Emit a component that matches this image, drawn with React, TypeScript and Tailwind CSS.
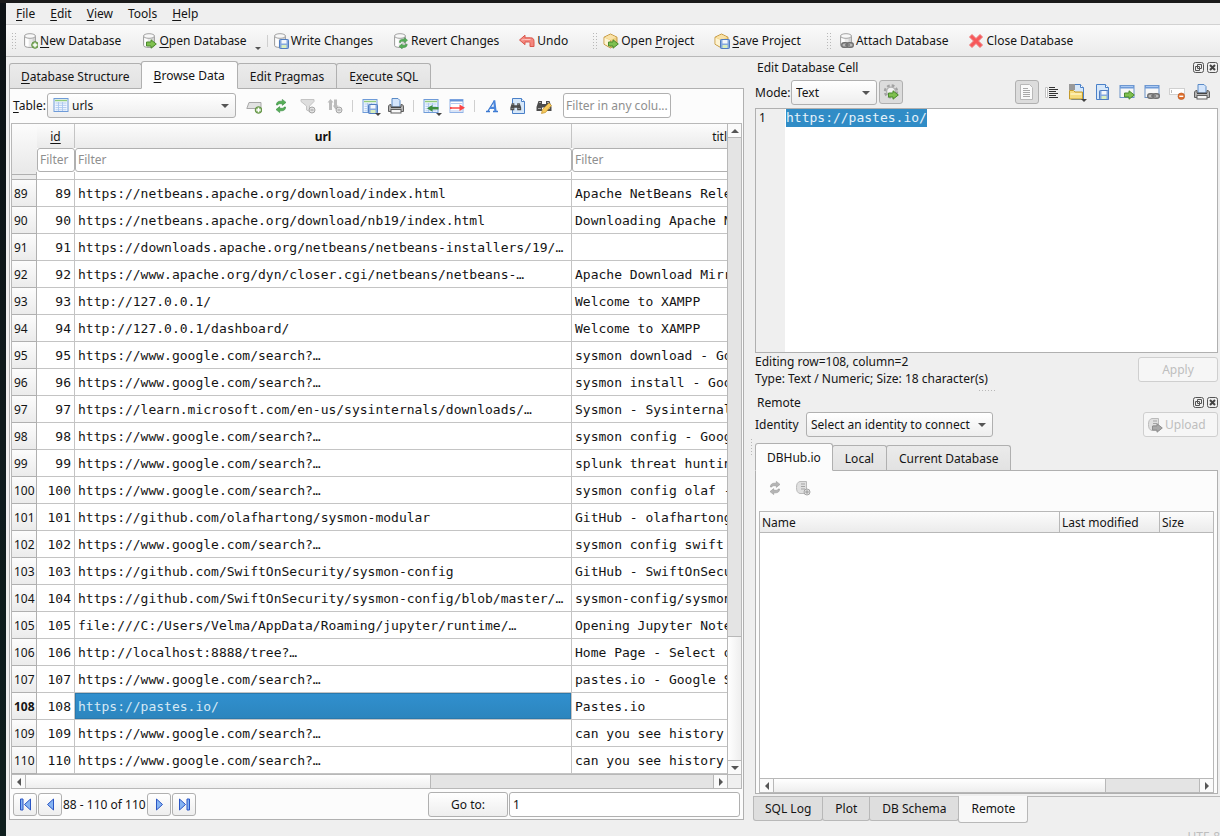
import { useEffect, useRef, useState } from 'react';
import type { ReactNode } from 'react';
import clsx from 'clsx';

interface UrlRow {
  id: number;
  url: string;
  title: string;
}

const rows: UrlRow[] = [
  { id: 89, url: 'https://netbeans.apache.org/download/index.html', title: 'Apache NetBeans Releases' },
  { id: 90, url: 'https://netbeans.apache.org/download/nb19/index.html', title: 'Downloading Apache NetBeans 19' },
  { id: 91, url: 'https://downloads.apache.org/netbeans/netbeans-installers/19/…', title: '' },
  { id: 92, url: 'https://www.apache.org/dyn/closer.cgi/netbeans/netbeans-…', title: 'Apache Download Mirrors' },
  { id: 93, url: 'http://127.0.0.1/', title: 'Welcome to XAMPP' },
  { id: 94, url: 'http://127.0.0.1/dashboard/', title: 'Welcome to XAMPP' },
  { id: 95, url: 'https://www.google.com/search?…', title: 'sysmon download - Google Search' },
  { id: 96, url: 'https://www.google.com/search?…', title: 'sysmon install - Google Search' },
  { id: 97, url: 'https://learn.microsoft.com/en-us/sysinternals/downloads/…', title: 'Sysmon - Sysinternals' },
  { id: 98, url: 'https://www.google.com/search?…', title: 'sysmon config - Google Search' },
  { id: 99, url: 'https://www.google.com/search?…', title: 'splunk threat hunting' },
  { id: 100, url: 'https://www.google.com/search?…', title: 'sysmon config olaf - Google Search' },
  { id: 101, url: 'https://github.com/olafhartong/sysmon-modular', title: 'GitHub - olafhartong/sysmon-modular' },
  { id: 102, url: 'https://www.google.com/search?…', title: 'sysmon config swift' },
  { id: 103, url: 'https://github.com/SwiftOnSecurity/sysmon-config', title: 'GitHub - SwiftOnSecurity' },
  { id: 104, url: 'https://github.com/SwiftOnSecurity/sysmon-config/blob/master/…', title: 'sysmon-config/sysmonconfig' },
  { id: 105, url: 'file:///C:/Users/Velma/AppData/Roaming/jupyter/runtime/…', title: 'Opening Jupyter Notebook' },
  { id: 106, url: 'http://localhost:8888/tree?…', title: 'Home Page - Select or create' },
  { id: 107, url: 'https://www.google.com/search?…', title: 'pastes.io - Google Search' },
  { id: 108, url: 'https://pastes.io/', title: 'Pastes.io' },
  { id: 109, url: 'https://www.google.com/search?…', title: 'can you see history' },
  { id: 110, url: 'https://www.google.com/search?…', title: 'can you see history' },
];

/* "&" marks the shortcut letter */
function Mnemonic({ text }: { text: string }) {
  const at = text.indexOf('&');
  if (at < 0) return <span>{text}</span>;
  return (
    <span>
      {text.slice(0, at)}
      <u className="underline-offset-2">{text[at + 1]}</u>
      {text.slice(at + 2)}
    </span>
  );
}

/* Icons */
function Svg({ children }: { children: ReactNode }) {
  return (
    <svg width="16" height="16" viewBox="0 0 16 16" className="shrink-0" aria-hidden="true">
      {children}
    </svg>
  );
}

const Cylinder = () => (
  <>
    <path d="M1.500 3.200v9.300c0 1.200 2.300 2 5.500 2s5.500-.8 5.500-2V3.200z" fill="#e9e9e9" stroke="#a3a3a3" />
    <path d="M2.500 5v7.600c.8.6 2 .9 3.200 1V5.600z" fill="#fff" />
    <path d="M9.500 5.400v8.200l2.500-.8V4.600z" fill="#d2d2d2" />
    <ellipse cx="7" cy="3" rx="5.500" ry="2.300" fill="#f8f8f8" stroke="#a3a3a3" />
  </>
);

const Plus = () => (
  <>
    <circle cx="12" cy="12" r="3.300" fill="#8db871" stroke="#5f8f42" />
    <path d="M12 9.800v4.400M9.800 12h4.400" stroke="#fff" strokeWidth="1.400" />
  </>
);

const GoArrow = ({ grey }: { grey?: boolean }) => (
  <path
    d="M5.500 9h4.500V6.800l5.300 4.200-5.300 4.200V13H5.500z"
    fill={grey ? '#a9a9a9' : '#7fc04f'}
    stroke={grey ? '#8d8d8d' : '#4b8a2c'}
    strokeLinejoin="round"
  />
);

const Floppy = () => (
  <>
    <rect x="6.500" y="6.500" width="9" height="9" rx=".8" fill="#86a9df" stroke="#4f7cc0" />
    <rect x="8.500" y="7" width="5" height="3.500" fill="#f4f7fc" />
    <rect x="8.500" y="12" width="5" height="3" fill="#d9eebd" />
  </>
);

const Chain = () => (
  <g fill="none" stroke="#707070" strokeWidth="1.400">
    <rect x="3.700" y="9.700" width="6.500" height="4.600" rx="2.300" fill="#b9b9b9" />
    <rect x="8.800" y="9.700" width="6.500" height="4.600" rx="2.300" fill="#b9b9b9" />
    <path d="M7 12h5" />
  </g>
);

const Arrows = ({ grey }: { grey?: boolean }) => (
  <g fill={grey ? '#b5b5b5' : '#55b055'} stroke={grey ? '#9a9a9a' : '#3b8a44'} strokeWidth=".6">
    <path d="M3.400 7C3.400 4.400 5 3.200 7 3.200h2.300V1.400L13 4.400 9.300 7.400V5.700H7C5.700 5.700 5 6.200 4.900 7z" />
    <path d="M12.600 9C12.600 11.600 11 12.800 9 12.800H6.700v1.800L3 11.600l3.700-3v1.700H9c1.300 0 2-.5 2.100-1.300z" />
  </g>
);

const Sheet = () => (
  <>
    <rect x="1" y="1.500" width="14" height="13" fill="#f3f8ff" stroke="#6f9bd8" />
    <path d="M2 3.500h12" stroke="#92cc7c" strokeWidth="1.500" />
    <path d="M2.500 6h11M2.500 8.300h11M2.500 10.600h11M2.500 12.800h11M5.500 5v9M9.500 5v9" stroke="#a9c6ee" strokeWidth=".9" />
  </>
);

const Box = () => (
  <>
    <path d="M1 4.200 7.500 1 14 4.200v7L7.500 15 1 11.200z" fill="#f0d080" stroke="#c59a44" strokeLinejoin="round" />
    <path d="M1.500 4.800 7.500 7.500v6.800l-6-3.400z" fill="#fdf3d3" />
    <path d="M2 4.200 7.500 1.600 13 4.200 7.500 7z" fill="#f9e2a8" />
    <path d="M7.500 7.200V14.500" stroke="#d8ae54" />
  </>
);

const Funnel = () => <path d="M1 1.500h13v2L9.500 8v5.500l-3-1.500V8L1 3.500z" fill="#dedede" stroke="#c4c4c4" />;

const Page = () => (
  <>
    <path d="M2.500.5h9l3 3v12h-12z" fill="#d7e8fa" stroke="#4a80c8" />
    <path d="M11.500.5v3h3" fill="#fff" stroke="#4a80c8" />
  </>
);

const Printer = () => (
  <>
    <path d="M4 .500h6l2 2V9H4z" fill="#d4e5fb" stroke="#5a8ac6" />
    <path d="M.5 9C.5 7 1.500 6.500 3 6.500V9h10V6.500c1.500 0 2.500.5 2.500 2.500v4.500H.5z" fill="#b5b5b5" stroke="#5f5f5f" />
    <rect x="3" y="11.500" width="10" height="3.500" fill="#f8f8f8" stroke="#5f5f5f" />
    <path d="M3 9.500h10" stroke="#444" />
  </>
);

const Binoculars = () => (
  <>
    <path d="M2.500 3h3.500v3h4V3h3.500l2 6v4H10V9.500H6V13H.5V9z" fill="#4c4c4c" />
    <path d="M2 10.500h3M11 10.500h3M3 4.500h2M11 4.500h2" stroke="#aaa" />
  </>
);

const Window = () => (
  <>
    <rect x="1" y="1.500" width="14" height="12" fill="#f7f7f7" stroke="#6d93c8" />
    <path d="M1 3h14" stroke="#6f9bd8" strokeWidth="3" />
    <path d="M2 2.500h12" stroke="#a9c8f2" />
  </>
);

const Server = () => (
  <>
    <path d="M5 1.500h6.500v12H5C2.500 13 1.500 11 1.500 7.500S2.500 2 5 1.500z" fill="#e0e0e0" stroke="#bababa" />
    <path d="M6 4h4M6 6.500h4M6 9h4" stroke="#a5a5a5" />
  </>
);

const icons = {
  newDb: <Svg><g transform="translate(1 0)"><Cylinder /></g><g transform="translate(1 0)"><Plus /></g></Svg>,
  openDb: <Svg><g transform="translate(1 0)"><Cylinder /></g><GoArrow /></Svg>,
  writeDb: <Svg><Cylinder /><Floppy /></Svg>,
  revertDb: <Svg><Cylinder /><g transform="translate(3.500 3.500) scale(.85)"><Arrows /></g></Svg>,
  undo: (
    <Svg>
      <path d="M.5 7 6 2.200v2.600h5.500c2.500 0 3.500 1.200 3.500 3.700v5h-4V10.500c0-1-.3-1.500-1.200-1.500H6v2.700z" fill="#f4867d" stroke="#d9574c" strokeLinejoin="round" />
      <path d="M2.500 7 5.500 6.500h6" fill="none" stroke="#fbc4be" />
    </Svg>
  ),
  openProject: <Svg><Box /><GoArrow /></Svg>,
  saveProject: <Svg><Box /><Floppy /></Svg>,
  attach: <Svg><g transform="translate(1 0)"><Cylinder /></g><Chain /></Svg>,
  close: (
    <Svg>
      <path d="M1.500 4 4 1.500l4 4 4-4L14.500 4l-4 4 4 4-2.500 2.500-4-4-4 4L1.500 12l4-4z" fill="#f7585a" stroke="#ee7a7a" strokeLinejoin="round" />
    </Svg>
  ),
  table: <Svg><Sheet /></Svg>,
  insertRow: (
    <Svg>
      <path d="M3 4.500h12v6H.8z" fill="#e2e2e2" stroke="#a8a8a8" />
      <g transform="translate(.5 0)"><Plus /></g>
    </Svg>
  ),
  refresh: <Svg><Arrows /></Svg>,
  refreshGrey: <Svg><Arrows grey /></Svg>,
  clearFilter: (
    <Svg>
      <Funnel />
      <circle cx="12" cy="12" r="3" fill="#e2e2e2" stroke="#a5a5a5" />
      <path d="M10.500 12h3" stroke="#999" />
    </Svg>
  ),
  clearSort: (
    <Svg>
      <path d="M3.500 1 6.500 4.500H5V12H2V4.500H.5zM7 1.500h3v6h1.500L8.500 11.500 5.800 7.500H7z" fill="#bcbcbc" />
      <circle cx="12" cy="12" r="3" fill="#e2e2e2" stroke="#a5a5a5" />
      <path d="M10.500 12h3" stroke="#999" />
    </Svg>
  ),
  saveTable: <Svg><Sheet /><Floppy /></Svg>,
  print: <Svg><Printer /></Svg>,
  insertValues: (
    <Svg>
      <Sheet />
      <path d="M15.500 9v2.500h-6v2.200L4 10.300 9.500 7v2z" fill="#3d8f3d" />
    </Svg>
  ),
  deleteRow: (
    <Svg>
      <rect x="1" y="1.500" width="13" height="13" fill="#fff" stroke="#8fb1e6" />
      <path d="M1 2.500h13" stroke="#6493d8" strokeWidth="2" />
      <path d="M2 5.500h11M2 13h11" stroke="#b4caee" />
      <path d="M1 9h9.500V6.500L16 9.800l-5.500 3.300V11H1z" fill="#fb4444" />
      <path d="M2.500 10h8" stroke="#ffc9c9" strokeWidth=".8" />
    </Svg>
  ),
  font: (
    <Svg>
      <path d="M2 13.500h4M9 13.500h5M4 13 10.500 2.500" fill="none" stroke="#3b78d0" strokeWidth="1.300" />
      <path d="M10.200 2.500l1.300 11M6 9.800h5" fill="none" stroke="#4a86dc" strokeWidth="2.200" />
    </Svg>
  ),
  find: <Svg><Page /><g transform="translate(0 3) scale(.72)"><Binoculars /></g></Svg>,
  replace: (
    <Svg>
      <Binoculars />
      <path d="M5.500 15.500l1-4 6.500-6.500L15.500 7.500l-6 7z" fill="#f5c95c" stroke="#c08f2c" strokeWidth=".7" />
    </Svg>
  ),
  gear: (
    <Svg>
      <circle cx="8" cy="7.500" r="6" fill="none" stroke="#a2a2a2" strokeWidth="2.400" strokeDasharray="2.700 2.010" />
      <circle cx="8" cy="7.500" r="4.400" fill="#f3f3f3" stroke="#b0b0b0" strokeWidth="1.400" />
      <GoArrow />
    </Svg>
  ),
  plainPage: (
    <Svg>
      <path d="M1.500.5h9l3 3v12h-12z" fill="#fafafa" stroke="#b8b8b8" />
      <path d="M4 4.500h5M4 6.500h7M4 8.500h7M4 10.500h7M4 12.500h7" stroke="#a8a8a8" />
    </Svg>
  ),
  wrap: (
    <Svg>
      <path d="M1.500 3.500h2v10h-2z" fill="#fff" stroke="#c4c4c4" />
      <path d="M5 3.500h6M5 5.500h9M5 7.500h7M5 9.500h9M5 11.500h7M5 13.500h9" stroke="#333" />
    </Svg>
  ),
  importFile: (
    <Svg>
      <Page />
      <path d="M0 0h6v6H0z" fill="#999" />
      <path d="M.5 6.500h4L6 8h7.500v7H.5z" fill="#f6dc7e" stroke="#c49a2c" />
      <path d="M1.500 10h11" stroke="#fff3c0" strokeWidth="1.500" />
    </Svg>
  ),
  exportFile: <Svg><Page /><g transform="translate(-1 0)"><Floppy /></g></Svg>,
  openApp: <Svg><Window /><GoArrow /></Svg>,
  copyLink: <Svg><Window /><Chain /></Svg>,
  setNull: (
    <Svg>
      <rect x=".5" y="4.500" width="15" height="6" fill="#fff" stroke="#d0d0d0" />
      <path d="M2.500 6v3" stroke="#bbb" />
      <circle cx="12.300" cy="12.300" r="3.300" fill="#e0702e" stroke="#b3501a" strokeWidth=".6" />
      <path d="M10.300 12.300h4" stroke="#fff" strokeWidth="1.400" />
    </Svg>
  ),
  upload: <Svg><Server /><GoArrow grey /></Svg>,
  clone: (
    <Svg>
      <Server />
      <circle cx="12" cy="12" r="3" fill="#e0e0e0" stroke="#a5a5a5" />
      <path d="M12 10.200v3.600M10.200 12h3.600" stroke="#999" />
    </Svg>
  ),
};

type IconName = keyof typeof icons;

const triangles = {
  up: 'M0 6 4 2l4 4z',
  down: 'M0 2h8L4 6z',
  left: 'M6 0v8L2 4z',
  right: 'M2 0v8l4-4z',
};

function Triangle({ dir }: { dir: keyof typeof triangles }) {
  return (
    <svg width="8" height="8" viewBox="0 0 8 8" className="shrink-0" aria-hidden="true">
      <path d={triangles[dir]} fill="#555" />
    </svg>
  );
}

const navShapes = {
  first: 'M2.500 2h2.500v11H2.500zM12.500 2v11L6.500 7.500z',
  prev: 'M10.500 2v11L4.500 7.500z',
  next: 'M4.500 2v11l6-5.500z',
  last: 'M10 2h2.500v11H10zM2.500 2v11l6-5.500z',
};

function NavButton({ kind, label }: { kind: keyof typeof navShapes; label: string }) {
  return (
    <button aria-label={label} className="flex h-[23px] w-6 items-center justify-center rounded-[3px] border border-[#b0b0b0] bg-gradient-to-b from-white to-[#eeeeee]">
      <svg width="15" height="15" viewBox="0 0 15 15" aria-hidden="true">
        <path d={navShapes[kind]} fill="#86b4f2" stroke="#2a55c4" strokeLinejoin="round" />
      </svg>
    </button>
  );
}

/* Toolbar pieces */
function Handle() {
  return <div className="h-[17px] w-[5px] shrink-0 bg-[radial-gradient(circle,#b8b8b8_0.8px,transparent_1px)] bg-[size:3px_3px]" />;
}

function ToolButton({ icon, text }: { icon: IconName; text: string }) {
  return (
    <button className="flex shrink-0 items-center gap-0.5 pt-px whitespace-nowrap">
      {icons[icon]}
      <Mnemonic text={text} />
    </button>
  );
}

function IconButton({ icon, label, wide, menu }: { icon: IconName; label: string; wide?: boolean; menu?: boolean }) {
  return (
    <button aria-label={label} className={clsx('relative flex h-6 shrink-0 items-center justify-center', wide ? 'w-[27px]' : 'w-[26px]')}>
      {icons[icon]}
      {menu && (
        <svg width="6" height="3" viewBox="0 0 6 3" className="absolute right-0.5 bottom-0.5" aria-hidden="true">
          <path d="M0 0h6L3 3z" fill="#444" />
        </svg>
      )}
    </button>
  );
}

function Separator() {
  return <div className="mx-1 h-3 w-px shrink-0 bg-[#cfcfcf]" />;
}

function Combo({ id, value, className, icon }: { id: string; value: string; className: string; icon?: IconName }) {
  return (
    <div className={clsx('relative h-[25px] shrink-0', className)}>
      <select
        id={id}
        className={clsx(
          'h-full w-full appearance-none rounded-[3px] border border-[#b0b0b0] bg-gradient-to-b from-white to-[#eeeeee]',
          icon ? 'pl-6' : 'pl-1',
        )}
      >
        <option>{value}</option>
      </select>
      {icon && <span className="pointer-events-none absolute top-1 left-1.5">{icons[icon]}</span>}
      <span className="pointer-events-none absolute inset-y-0 right-[7px] flex items-center">
        <Triangle dir="down" />
      </span>
    </div>
  );
}

function HScroll({ thumb }: { thumb: number }) {
  return (
    <div className="flex h-[14px] min-w-0 flex-1 border-t border-[#b8b8b8] bg-[#e4e4e4]">
      <button aria-label="Scroll left" className="flex w-[14px] shrink-0 items-center justify-center border-r border-[#b8b8b8] bg-[#fafafa]">
        <Triangle dir="left" />
      </button>
      <div className="flex-1">
        <div className="h-full border-r border-[#b8b8b8] bg-gradient-to-b from-white to-[#eeeeee]" style={{ width: `${thumb}%` }} />
      </div>
      <button aria-label="Scroll right" className="flex w-[14px] shrink-0 items-center justify-center border-l border-[#b8b8b8] bg-[#fafafa]">
        <Triangle dir="right" />
      </button>
    </div>
  );
}

function Tabs({ tabs, active, onSelect }: { tabs: string[]; active: string; onSelect: (tab: string) => void }) {
  return (
    <div className="relative flex shrink-0 items-end">
      {tabs.map((tab, index) => (
        <button
          key={tab}
          onClick={() => onSelect(tab)}
          className={clsx(
            'rounded-t-[3px] border border-[#b0b0b0] pt-px whitespace-nowrap',
            index > 0 ? '-ml-px px-3' : 'px-[11px]',
            tab === active ? 'z-10 -mb-px h-7 border-b-[#fcfcfc] bg-[#fcfcfc]' : 'h-[25px] border-b-0 bg-gradient-to-b from-[#ebebeb] to-[#e2e2e2]',
          )}
        >
          <Mnemonic text={tab} />
        </button>
      ))}
    </div>
  );
}

function DockTitle({ title }: { title: string }) {
  return (
    <div className="flex h-5 shrink-0 items-center pl-0.5">
      <h2 className="flex-1 pt-0.5">{title}</h2>
      <button aria-label={`Float ${title}`}>
        <svg width="11" height="11" viewBox="0 0 11 11">
          <rect x=".5" y=".5" width="10" height="10" rx="2" fill="none" stroke="#555" />
          <path d="M4.500 2.500h4v4h-4zM2.500 4.500h4v4h-4z" fill="none" stroke="#555" />
        </svg>
      </button>
      <button aria-label={`Close ${title}`} className="ml-[3px]">
        <svg width="11" height="11" viewBox="0 0 11 11">
          <rect x=".5" y=".5" width="10" height="10" rx="2" fill="none" stroke="#555" />
          <path d="M3 3l5 5M8 3 3 8" stroke="#444" strokeWidth="2" />
        </svg>
      </button>
    </div>
  );
}

function DataGrid() {
  const selected = 108;
  const filter = 'block h-6 w-full rounded-[3px] border border-[#b0b0b0] bg-white px-0.5 pb-px font-normal placeholder:text-[#8f8f8f]';
  const head = 'bg-gradient-to-b from-[#fcfcfc] to-[#ebebeb] p-0 pt-0.5';
  const cell = "border-b border-[#c4c4c4] p-0 pt-px align-middle font-['DejaVu_Sans_Mono',monospace] text-[13px]";

  return (
    <div className="mx-px flex min-h-0 flex-1 flex-col border border-[#b8b8b8] bg-white">
      <div className="flex min-h-0 flex-1">
        <div className="min-w-0 flex-1 overflow-hidden">
          <table className="w-[862px] table-fixed border-separate border-spacing-0">
            <colgroup>
              <col className="w-[25px]" />
              <col className="w-[38px]" />
              <col className="w-[497px]" />
              <col />
            </colgroup>
            <thead>
              <tr className="h-6">
                <th rowSpan={2} className="bg-gradient-to-b from-[#fcfcfc] to-[#e9e9e9] p-0" />
                <th className={clsx(head, 'border-r border-[#c4c4c4] font-normal')}>
                  <span className="underline underline-offset-2">id</span>
                </th>
                <th className={clsx(head, 'border-r border-[#c4c4c4] font-bold')}>url</th>
                <th className={clsx(head, 'font-normal')}>title</th>
              </tr>
              <tr className="h-6">
                <td className="p-0"><input aria-label="Filter id" placeholder="Filter" className={filter} /></td>
                <td className="p-0"><input aria-label="Filter url" placeholder="Filter" className={filter} /></td>
                <td className="p-0"><input aria-label="Filter title" placeholder="Filter" className={filter} /></td>
              </tr>
              <tr className="h-2">
                <td className="border-r border-b border-[#b0b0b0] bg-[#ebebeb] p-0">
                  <div className="mb-[3px] h-px bg-[#b0b0b0]" />
                </td>
                <td className="border-r border-b border-[#c4c4c4] p-0" />
                <td className="border-r border-b border-[#c4c4c4] p-0" />
                <td className="border-b border-[#c4c4c4] p-0" />
              </tr>
            </thead>
            <tbody>
              {rows.map((row) => (
                <tr key={row.id} className="h-[27px] whitespace-nowrap">
                  <th
                    className={clsx(
                      'border-r border-b border-[#b0b0b0] bg-gradient-to-b from-[#fcfcfc] to-[#ebebeb] p-0 pt-0.5 pl-0.5 text-left',
                      row.id === selected ? 'font-bold' : 'font-normal',
                    )}
                  >
                    {row.id}
                  </th>
                  <td className={clsx(cell, 'border-r pr-[3px] text-right')}>{row.id}</td>
                  <td
                    className={clsx(
                      cell,
                      'border-r pl-[3px]',
                      row.id === selected && 'bg-gradient-to-b from-[#3190cf] to-[#2c85bd] text-[#d6e9f5] shadow-[inset_0_0_0_1px_#2a79ad]',
                    )}
                  >
                    {row.url}
                  </td>
                  <td className={clsx(cell, 'pl-[3px]')}>{row.title}</td>
                </tr>
              ))}
            </tbody>
          </table>
        </div>
        <div className="flex w-[14px] shrink-0 flex-col border-l border-[#b8b8b8] bg-[#e4e4e4]">
          <button aria-label="Scroll up" className="flex h-[14px] shrink-0 items-center justify-center border-b border-[#b8b8b8] bg-[#fafafa]">
            <Triangle dir="up" />
          </button>
          <div className="flex flex-1 flex-col justify-end">
            <div className="h-1/5 border-t border-[#b8b8b8] bg-gradient-to-r from-white to-[#eeeeee]" />
          </div>
          <button aria-label="Scroll down" className="flex h-[14px] shrink-0 items-center justify-center border-t border-[#b8b8b8] bg-[#fafafa]">
            <Triangle dir="down" />
          </button>
        </div>
      </div>
      <div className="flex shrink-0">
        <HScroll thumb={59} />
        <div className="w-[14px] border-t border-l border-[#b8b8b8] bg-[#efefef]" />
      </div>
    </div>
  );
}

function BrowsePanel() {
  return (
    <div className="flex min-h-0 flex-1 flex-col border border-[#b0b0b0] bg-[#fcfcfc]">
      <div className="flex shrink-0 items-center pt-1 pb-[5px] pl-[3px]">
        <label htmlFor="table" className="w-[34px]"><Mnemonic text="&Table:" /></label>
        <Combo id="table" value="urls" icon="table" className="mr-1 w-[189px]" />
        <IconButton icon="insertRow" label="Insert row" wide />
        <IconButton icon="refresh" label="Refresh" wide />
        <IconButton icon="clearFilter" label="Clear filters" wide />
        <IconButton icon="clearSort" label="Clear sorting" wide />
        <Separator />
        <IconButton icon="saveTable" label="Save table" menu />
        <IconButton icon="print" label="Print" />
        <Separator />
        <IconButton icon="insertValues" label="Insert values" menu />
        <IconButton icon="deleteRow" label="Delete row" />
        <Separator />
        <IconButton icon="font" label="Format" />
        <IconButton icon="find" label="Find" />
        <IconButton icon="replace" label="Replace" />
        <input
          aria-label="Filter in any column"
          placeholder="Filter in any colu..."
          className="ml-1.5 h-[25px] w-[108px] rounded-[3px] border border-[#b0b0b0] bg-white px-0.5 placeholder:text-[#8f8f8f]"
        />
      </div>

      <DataGrid />

      <div className="flex shrink-0 items-center gap-px px-[3px] pt-[3px] pb-0.5">
        <NavButton kind="first" label="First page" />
        <NavButton kind="prev" label="Previous page" />
        <span className="w-[83px] whitespace-nowrap">88 - 110 of 110</span>
        <NavButton kind="next" label="Next page" />
        <NavButton kind="last" label="Last page" />
        <button className="ml-auto h-[25px] w-20 rounded-[3px] border border-[#b0b0b0] bg-gradient-to-b from-white to-[#eeeeee]">Go to:</button>
        <input aria-label="Go to row" defaultValue="1" className="h-[25px] w-[231px] rounded-[3px] border border-[#b0b0b0] bg-white px-[3px]" />
      </div>
    </div>
  );
}

function EditCellDock() {
  const editor = useRef<HTMLTextAreaElement>(null);

  useEffect(() => {
    editor.current?.focus();
    editor.current?.select();
  }, []);

  const small = 'relative flex h-6 w-[25px] items-center justify-center';
  const pressed = 'flex h-6 w-6 items-center justify-center rounded-[3px] border border-[#b0b0b0] bg-[#dcdcdc]';

  return (
    <section className="flex min-h-0 flex-[335] flex-col pr-0.5 pl-0.5">
      <DockTitle title="Edit Database Cell" />
      <div className="mt-[3px] flex shrink-0 items-start pr-1">
        <label htmlFor="mode" className="w-9 self-center">Mode:</label>
        <Combo id="mode" value="Text" className="w-[86px]" />
        <button aria-label="Automatic mode" className={clsx(pressed, 'ml-0.5')}>{icons.gear}</button>
        <div className="ml-auto flex items-center">
          <button aria-label="Text view" className={pressed}>{icons.plainPage}</button>
          <button aria-label="Word wrap" className={small}>{icons.wrap}</button>
          <button aria-label="Import" className={small}>
            {icons.importFile}
            <svg width="6" height="3" viewBox="0 0 6 3" className="absolute right-0.5 bottom-0.5" aria-hidden="true">
              <path d="M0 0h6L3 3z" fill="#444" />
            </svg>
          </button>
          <button aria-label="Export" className={small}>{icons.exportFile}</button>
          <button aria-label="Open in application" className={small}>{icons.openApp}</button>
          <button aria-label="Copy" className={small}>{icons.copyLink}</button>
          <button aria-label="Set as NULL" className={small}>{icons.setNull}</button>
          <button aria-label="Print cell" className={small}>{icons.print}</button>
        </div>
      </div>
      <div className="mt-[3px] flex min-h-0 flex-1 border border-[#b0b0b0] bg-white">
        <div className="w-[29px] bg-[#efefef] pl-[3px] leading-[18px]">1</div>
        <textarea
          ref={editor}
          aria-label="Cell value"
          spellCheck={false}
          defaultValue="https://pastes.io/"
          className="flex-1 resize-none pl-px font-['DejaVu_Sans_Mono',monospace] text-[13px] leading-[18px] outline-none selection:bg-[#308cc6] selection:text-[#e6f2fa]"
        />
      </div>
      <div className="flex shrink-0 items-start justify-between pb-0.5">
        <p className="leading-[17px]">
          Editing row=108, column=2
          <br />
          Type: Text / Numeric; Size: 18 character(s)
        </p>
        <button disabled className="mt-1 h-[25px] w-20 rounded-[3px] border border-[#cfcfcf] bg-[#f6f6f6] text-[#bebebe]">Apply</button>
      </div>
      <div className="mx-auto h-[3px] w-[17px] shrink-0 bg-[radial-gradient(circle,#b8b8b8_0.8px,transparent_1px)] bg-[size:3px_3px]" />
    </section>
  );
}

function RemoteDock() {
  const [tab, setTab] = useState('DBHub.io');
  const [dock, setDock] = useState('Remote');
  const head = 'h-[21px] border-b border-[#b8b8b8] bg-gradient-to-b from-[#fcfcfc] to-[#ebebeb] p-0 pt-px pl-0.5 text-left font-normal';

  return (
    <section className="flex min-h-0 flex-[444] flex-col">
      <div className="flex min-h-0 flex-1 flex-col pr-0.5 pl-0.5">
        <DockTitle title="Remote" />
        <div className="flex shrink-0 items-center">
          <label htmlFor="identity" className="w-[51px]">Identity</label>
          <Combo id="identity" value="Select an identity to connect" className="w-[187px]" />
          <button disabled className="ml-auto flex h-[25px] w-[75px] items-center gap-0.5 rounded-[3px] border border-[#cfcfcf] bg-[#f6f6f6] pl-[3px] text-[#bebebe]">
            {icons.upload}
            Upload
          </button>
        </div>
        <div className="mt-1.5 flex min-h-0 flex-1 flex-col">
          <Tabs tabs={['DBHub.io', 'Local', 'Current Database']} active={tab} onSelect={setTab} />
          <div className="flex min-h-0 flex-1 flex-col border border-[#b0b0b0] bg-[#fcfcfc] px-[3px]">
            <div className="mb-1.5 flex h-[34px] shrink-0 items-center gap-3 pl-2">
              <button aria-label="Refresh remote">{icons.refreshGrey}</button>
              <button aria-label="Clone database">{icons.clone}</button>
            </div>
            <div className="flex min-h-0 flex-1 flex-col border border-[#b8b8b8] bg-white">
              <table className="w-full table-fixed border-separate border-spacing-0">
                <thead>
                  <tr>
                    <th className={clsx(head, 'border-r')}>Name</th>
                    <th className={clsx(head, 'w-[100px] border-r')}>Last modified</th>
                    <th className={clsx(head, 'w-[53px]')}>Size</th>
                  </tr>
                </thead>
              </table>
              <div className="flex-1" />
              <div className="flex shrink-0"><HScroll thumb={78} /></div>
            </div>
          </div>
        </div>
      </div>
      <div className="mt-0.5 flex h-10 shrink-0 items-start border-t border-[#b8b8b8]">
        {['SQL Log', 'Plot', 'DB Schema', 'Remote'].map((name, index) => (
          <button
            key={name}
            onClick={() => setDock(name)}
            className={clsx(
              'rounded-b-[3px] border border-t-0 border-[#b8b8b8] whitespace-nowrap',
              index > 0 ? '-ml-px px-3' : 'px-[11px]',
              name === dock ? 'z-10 -mt-px h-[27px] bg-[#f8f8f8]' : 'h-6 bg-[#dedede]',
            )}
          >
            {name}
          </button>
        ))}
        <span className="-mb-1 ml-auto self-end leading-[6px] text-[#bebebe]">UTF-8</span>
      </div>
    </section>
  );
}

export default function App() {
  const [tab, setTab] = useState('&Browse Data');

  return (
    <div className="flex h-screen flex-col overflow-hidden bg-[#efefef] font-['Noto_Sans',sans-serif] text-xs leading-[18px] text-[#141414]">
      <div className="h-[3px] shrink-0 bg-[#1b1b1b]" />
      <div className="flex min-h-0 flex-1">
        <div className="w-1.5 shrink-0 bg-gradient-to-b from-[#0d1215] via-[#0e1a1c] to-[#0f1f1e]" />
        <div className="flex min-w-0 flex-1 flex-col">
          <nav className="flex h-[22px] shrink-0 items-center gap-[15px] border-b border-[#d2d2d2] pl-2.5">
            {['&File', '&Edit', '&View', 'Too&ls', '&Help'].map((item) => (
              <button key={item}><Mnemonic text={item} /></button>
            ))}
          </nav>

          <div className="flex h-8 shrink-0 items-center border-b border-[#b8b8b8] bg-gradient-to-b from-[#fafafa] to-[#ebebeb] pl-[5px]">
            <div className="flex items-center">
              <Handle />
              <div className="ml-1.5 flex items-center gap-5">
                <ToolButton icon="newDb" text="&New Database" />
                <ToolButton icon="openDb" text="&Open Database" />
              </div>
              <button aria-label="Recent files" className="ml-2 self-end">
                <svg width="6" height="3" viewBox="0 0 6 3" aria-hidden="true"><path d="M0 0h6L3 3z" fill="#555" /></svg>
              </button>
              <div className="mr-[5px] ml-1.5 h-3 w-px bg-[#cfcfcf]" />
              <div className="flex items-center gap-5">
                <ToolButton icon="writeDb" text="Write Changes" />
                <ToolButton icon="revertDb" text="Revert Changes" />
                <ToolButton icon="undo" text="Undo" />
              </div>
            </div>
            <div className="ml-6 flex items-center">
              <Handle />
              <div className="ml-1.5 flex items-center gap-5">
                <ToolButton icon="openProject" text="Open &Project" />
                <ToolButton icon="saveProject" text="&Save Project" />
              </div>
            </div>
            <div className="ml-[25px] flex items-center">
              <Handle />
              <div className="ml-[7px] flex items-center gap-5">
                <ToolButton icon="attach" text="Attach Database" />
                <ToolButton icon="close" text="Close Database" />
              </div>
            </div>
          </div>

          <div className="flex min-h-0 flex-1">
            <main className="flex min-w-0 flex-1 flex-col pt-1 pb-4 pl-[3px]">
              <Tabs tabs={['&Database Structure', '&Browse Data', 'Edit P&ragmas', 'E&xecute SQL']} active={tab} onSelect={setTab} />
              <BrowsePanel />
            </main>
            <div className="flex w-[9px] shrink-0 items-center justify-end">
              <div className="h-[17px] w-[3px] bg-[radial-gradient(circle,#b8b8b8_0.8px,transparent_1px)] bg-[size:3px_3px]" />
            </div>
            <aside className="flex w-[467px] shrink-0 flex-col">
              <EditCellDock />
              <RemoteDock />
            </aside>
          </div>
        </div>
      </div>
    </div>
  );
}
